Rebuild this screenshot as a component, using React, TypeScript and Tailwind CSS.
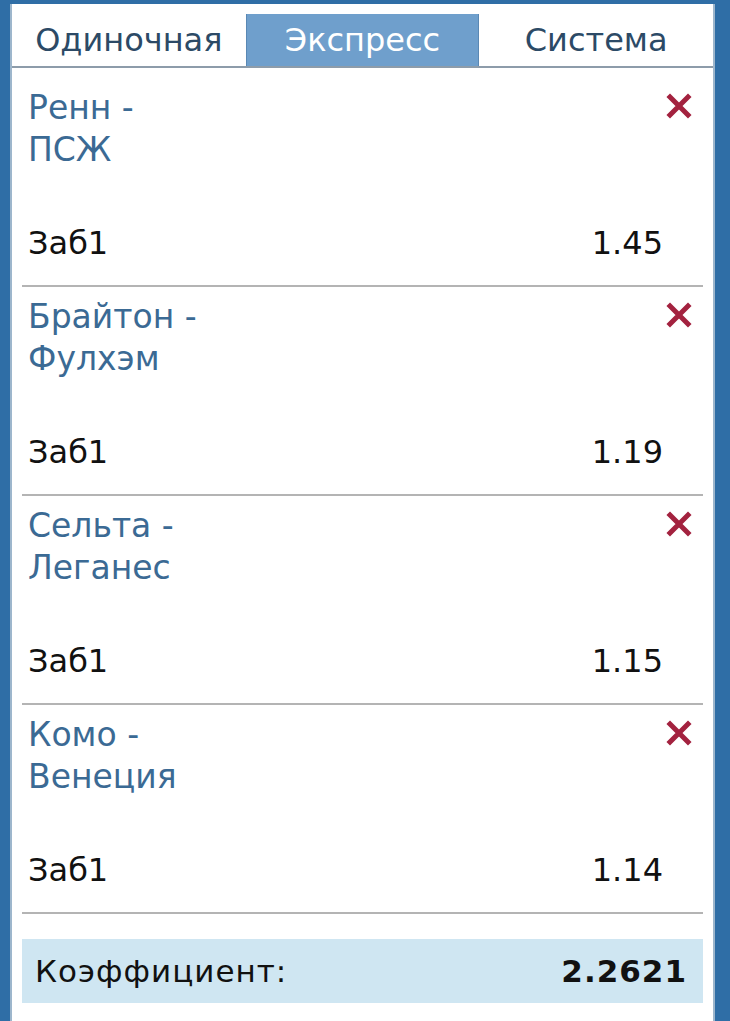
import React from "react"

type Bet = {
    id: number,
    home: string,
    away: string,
    pick: string,
    odds: string
}

const bets: Bet[] = [
    { id: 0, home: "Ренн", away: "ПСЖ", pick: "Заб1", odds: "1.45" },
    { id: 1, home: "Брайтон", away: "Фулхэм", pick: "Заб1", odds: "1.19" },
    { id: 2, home: "Сельта", away: "Леганес", pick: "Заб1", odds: "1.15" },
    { id: 3, home: "Комо", away: "Венеция", pick: "Заб1", odds: "1.14" },
]

const tabs = ["Одиночная", "Экспресс", "Система"]

function RemoveIcon() {
    return (
        <svg width="26" height="26" viewBox="0 0 26 26" className="block">
            <path d="M4 4 L22 22 M22 4 L4 22" stroke="#a3223f" strokeWidth="5" strokeLinecap="square" />
        </svg>
    )
}

function BetRow({ bet, first }: { bet: Bet, first: boolean }) {
    return (
        <div className={`${first ? "pt-[19px]" : "pt-[9px]"} pb-[21px] mx-[10px] border-b-2 border-[#b4b4b4]`}>
            <div className="flex justify-between pl-[6px] pr-[11px]">
                <div className="text-[#3b6a94] text-[33px] leading-[42px]">
                    <div>{bet.home} -</div>
                    <div>{bet.away}</div>
                </div>
                <div className="pt-[6px]">
                    <RemoveIcon />
                </div>
            </div>
            <div className="flex justify-between pl-[6px] pr-[40px] mt-[51px] text-[32px] leading-[42px] text-[#111]">
                <span>{bet.pick}</span>
                <span>{bet.odds}</span>
            </div>
        </div>
    )
}

export default function App() {
    return (
        <div className="w-[730px] h-[1021px] bg-[#2f6ea6] flex pt-[4px] pl-[10px] pr-[15px] overflow-hidden" style={{ fontFamily: "Tahoma, 'DejaVu Sans', sans-serif" }}>
            <div className="flex-1 bg-white border-x-2 border-[#9db6cc] pt-[10px] flex flex-col">
                <div className="grid grid-cols-3 h-[54px] border-b-2 border-[#8d9caa]">
                    {
                        tabs.map((t, i) => (
                            <div key={t} className={`flex items-center justify-center text-[32px] ${i === 1 ? "bg-[#6f9fcc] text-white border-x border-[#5a88b4]" : "text-[#2c4a66]"}`}>
                                {t}
                            </div>
                        ))
                    }
                </div>
                {
                    bets.map((b, i) => <BetRow key={b.id} bet={b} first={i === 0} />)
                }
                <div className="mx-[10px] mt-[25px] h-[64px] bg-[#cfe6f2] flex items-center justify-between pl-[13px] pr-[16px] text-[31px] tracking-[1px] text-[#111]">
                    <span>Коэффициент:</span>
                    <span className="font-bold">2.2621</span>
                </div>
            </div>
        </div>
    )
}
